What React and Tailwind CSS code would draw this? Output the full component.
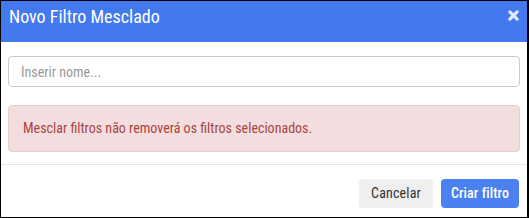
import React from "react";

export default function App() {
  return (
    <div
      className="w-[529px] h-[218px] bg-black p-[1px] pr-[2px]"
      style={{ fontFamily: "Roboto, 'Liberation Sans', Arial, sans-serif", fontStretch: "condensed" }}
    >
      <div className="flex h-full flex-col bg-white">
        <div className="flex h-[41px] items-start justify-between bg-[#4379ee] pl-[8px] pr-[8px] pt-[5px]">
          <span className="text-[18px] leading-[22px] text-white">Novo Filtro Mesclado</span>
          <svg width="11" height="11" viewBox="0 0 10 10" className="mt-[4px] opacity-85">
            <path d="M1.7 1.7 L8.3 8.3 M8.3 1.7 L1.7 8.3" stroke="white" strokeWidth="2.8" strokeLinecap="round" />
          </svg>
        </div>
        <div className="flex flex-col px-[7px] pt-[14px]">
          <input
            placeholder="Inserir nome..."
            className="h-[31px] w-full rounded-[4px] border border-[#cccccc] px-[12px] text-[14px] [font-stretch:condensed] text-[#555] placeholder:text-[#999] outline-none"
          />
          <div className="mt-[18px] flex h-[47px] items-center rounded-[4px] border border-[#ebccd1] bg-[#f2dede] px-[14px] text-[14px] text-[#a94442]">
            Mesclar filtros não removerá os filtros selecionados.
          </div>
        </div>
        <div className="mt-[12px] border-t border-[#e5e5e5]" />
        <div className="flex justify-end gap-[8px] px-[8px] pt-[14px]">
          <button className="h-[29px] w-[74px] rounded-[4px] bg-[#efefef] text-[14px] tracking-[0.15px] text-[#333]">Cancelar</button>
          <button className="h-[29px] w-[78px] rounded-[4px] bg-[#4a80f0] text-[14px] font-medium tracking-[0.1px] text-white">Criar filtro</button>
        </div>
      </div>
    </div>
  );
}
